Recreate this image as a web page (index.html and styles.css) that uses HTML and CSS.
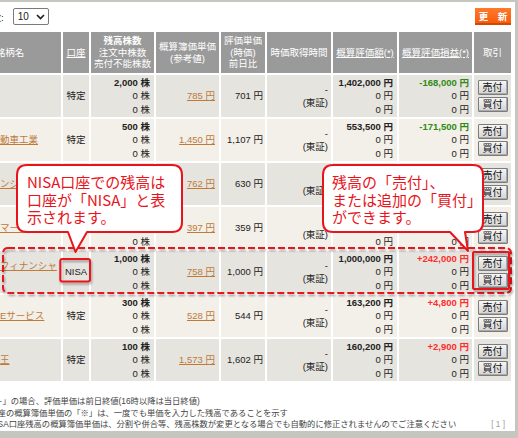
FILE: index.html
```html
<!DOCTYPE html>
<html lang="ja">
<head>
<meta charset="utf-8">
<title>保有株式一覧</title>
<link rel="stylesheet" href="styles.css">
</head>
<body>
<div class="frame">
  <div class="toolbar">
    <div class="perpage">
      <span>表示件数:</span>
      <div class="select"><span>10</span><svg width="9" height="6" viewBox="0 0 9 6"><polyline points="1,1 4.5,4.5 8,1" fill="none" stroke="#222" stroke-width="1.7"/></svg></div>
    </div>
    <button class="refresh">更　新</button>
  </div>
  <table class="holdings">
    <colgroup>
      <col style="width:104px"><col style="width:28px"><col style="width:65px"><col style="width:65px"><col style="width:46px"><col style="width:66px"><col style="width:66px"><col style="width:75px"><col style="width:39px">
    </colgroup>
    <thead>
      <tr>
        <th>銘柄名</th>
        <th><span class="ul">口座</span></th>
        <th><b>残高株数</b><br>注文中株数<br>売付不能株数</th>
        <th>概算簿価単価<br>(参考値)</th>
        <th>評価単価<br>(時価)<br>前日比</th>
        <th>時価取得時間</th>
        <th><span class="ul">概算評価額(*)</span></th>
        <th><span class="ul">概算評価損益(*)</span></th>
        <th>取引</th>
      </tr>
    </thead>
    <tbody>
      <tr>
        <td class="name"><a href="#">日立</a></td>
        <td>特定</td>
        <td><b>2,000 株</b><br>0 株<br>0 株</td>
        <td><a href="#">785 円</a></td>
        <td>701 円</td>
        <td>-<br>(東証)</td>
        <td><b>1,402,000 円</b><br>0 円<br>0 円</td>
        <td><b class="neg">-168,000 円</b><br>0 円<br>0 円</td>
        <td><button class="trade">売付</button><button class="trade">買付</button></td>
      </tr>
      <tr>
        <td class="name"><a href="#">トヨタ自動車工業</a></td>
        <td>特定</td>
        <td><b>500 株</b><br>0 株<br>0 株</td>
        <td><a href="#">1,450 円</a></td>
        <td>1,107 円</td>
        <td>-<br>(東証)</td>
        <td><b>553,500 円</b><br>0 円<br>0 円</td>
        <td><b class="neg">-171,500 円</b><br>0 円<br>0 円</td>
        <td><button class="trade">売付</button><button class="trade">買付</button></td>
      </tr>
      <tr>
        <td class="name"><a href="#">日本オレンジ工業</a></td>
        <td>特定</td>
        <td><b>1,000 株</b><br>0 株<br>0 株</td>
        <td><a href="#">762 円</a></td>
        <td>630 円</td>
        <td>-<br>(東証)</td>
        <td><b>630,000 円</b><br>0 円<br>0 円</td>
        <td><b class="neg">-132,000 円</b><br>0 円<br>0 円</td>
        <td><button class="trade">売付</button><button class="trade">買付</button></td>
      </tr>
      <tr>
        <td class="name"><a href="#">セイコーマート</a></td>
        <td>特定</td>
        <td><b>1,000 株</b><br>0 株<br>0 株</td>
        <td><a href="#">397 円</a></td>
        <td>359 円</td>
        <td>-<br>(東証)</td>
        <td><b>359,000 円</b><br>0 円<br>0 円</td>
        <td><b class="neg">-38,000 円</b><br>0 円<br>0 円</td>
        <td><button class="trade">売付</button><button class="trade">買付</button></td>
      </tr>
      <tr>
        <td class="name"><a href="#">三井住友フィナンシャルG</a></td>
        <td>NISA</td>
        <td><b>1,000 株</b><br>0 株<br>0 株</td>
        <td><a href="#">758 円</a></td>
        <td>1,000 円</td>
        <td>-<br>(東証)</td>
        <td><b>1,000,000 円</b><br>0 円<br>0 円</td>
        <td><b class="pos">+242,000 円</b><br>0 円<br>0 円</td>
        <td><button class="trade">売付</button><button class="trade">買付</button></td>
      </tr>
      <tr>
        <td class="name"><a href="#">東京電力Eサービス</a></td>
        <td>特定</td>
        <td><b>300 株</b><br>0 株<br>0 株</td>
        <td><a href="#">528 円</a></td>
        <td>544 円</td>
        <td>-<br>(東証)</td>
        <td><b>163,200 円</b><br>0 円<br>0 円</td>
        <td><b class="pos">+4,800 円</b><br>0 円<br>0 円</td>
        <td><button class="trade">売付</button><button class="trade">買付</button></td>
      </tr>
      <tr>
        <td class="name"><a href="#">ニベア花王</a></td>
        <td>特定</td>
        <td><b>100 株</b><br>0 株<br>0 株</td>
        <td><a href="#">1,573 円</a></td>
        <td>1,602 円</td>
        <td>-<br>(東証)</td>
        <td><b>160,200 円</b><br>0 円<br>0 円</td>
        <td><b class="pos">+2,900 円</b><br>0 円<br>0 円</td>
        <td><button class="trade">売付</button><button class="trade">買付</button></td>
      </tr>
    </tbody>
  </table>
  <div class="notes">
    <p>※「−」の場合、評価単価は前日終値(16時以降は当日終値)</p>
    <p>※口座の概算簿価単価の「※」は、一度でも単価を入力した残高であることを示す</p>
    <p class="last"><span>※NISA口座残高の概算簿価単価は、分割や併合等、残高株数が変更となる場合でも自動的に修正されませんのでご注意ください</span><span class="pager">[ 1 ]</span></p>
  </div>
</div>

<svg class="marks" width="518" height="438" viewBox="0 0 518 438">
  <defs>
    <filter id="sh" x="-10%" y="-20%" width="130%" height="160%">
      <feDropShadow dx="1" dy="2" stdDeviation="1.3" flood-color="#000" flood-opacity="0.35"/>
    </filter>
  </defs>
  <rect x="3" y="248" width="508" height="45" rx="5" fill="none" stroke="#e8141c" stroke-width="2" stroke-dasharray="7 3" filter="url(#sh)"/>
  <rect x="60.3" y="259" width="29.7" height="22.5" rx="2" fill="none" stroke="#e8141c" stroke-width="2" filter="url(#sh)"/>
  <rect x="473" y="252" width="36" height="37" rx="1" fill="none" stroke="#e8141c" stroke-width="2" filter="url(#sh)"/>
  <path d="M27 165 H172 Q182 165 182 175 V222 Q182 232 172 232 H87 L75.5 252 L68 232 H27 Q17 232 17 222 V175 Q17 165 27 165 Z" fill="#fff" stroke="#e8141c" stroke-width="2" stroke-linejoin="round"/>
  <path d="M333 165 H473 Q483 165 483 175 V222 Q483 232 473 232 H465 L468 251 L450 232 H333 Q323 232 323 222 V175 Q323 165 333 165 Z" fill="#fff" stroke="#e8141c" stroke-width="2" stroke-linejoin="round"/>
</svg>
<div class="callout-text callout-left">NISA口座での残高は<br>口座が「NISA」と表<br>示されます。</div>
<div class="callout-text callout-right">残高の「売付」、<br>または追加の「買付」<br>ができます。</div>
</body>
</html>
```

FILE: styles.css
```css
* { box-sizing: border-box; }

body {
  margin: 0;
  width: 518px;
  height: 438px;
  overflow: hidden;
  position: relative;
  background: #c6c6c0;
  font-family: "Liberation Sans", "Noto Sans CJK JP", sans-serif;
  color: #333;
}

.frame {
  width: 566px;
  height: 429px;
  margin: 2px 0 0 -51px;
  padding: 6px 4px 0 8px;
  background: #fff;
}

.toolbar {
  display: flex;
  justify-content: space-between;
  align-items: center;
  height: 17px;
  margin-bottom: 5px;
}

.perpage {
  display: flex;
  align-items: center;
  gap: 9px;
  padding-left: 6px;
  font-size: 9.5px;
  color: #222;
}

.select {
  display: flex;
  align-items: center;
  justify-content: space-between;
  width: 36px;
  height: 17px;
  border: 1px solid #7a7a7a;
  border-radius: 2px;
  padding: 0 3px 0 4px;
  font-size: 10px;
  color: #222;
  background: #fff;
}

.refresh {
  width: 36px;
  height: 17px;
  border: 0;
  padding: 0;
  background: linear-gradient(#ff7a2c, #f5580a);
  box-shadow: inset 0 -2px 0 #d44800;
  color: #fff;
  font-family: "Liberation Sans", "Noto Sans CJK JP", sans-serif;
  font-weight: bold;
  font-size: 9.5px;
  line-height: 15px;
}

.holdings {
  width: 554px;
  table-layout: fixed;
  border-collapse: collapse;
  font-size: 9.5px;
}

.holdings th,
.holdings td {
  border: 2px solid #fff;
  padding: 0 3px;
  vertical-align: middle;
  overflow: hidden;
  white-space: nowrap;
}

.holdings th {
  background: #9a9a9a;
  color: #fff;
  font-weight: normal;
  line-height: 11.5px;
  height: 43px;
  text-align: center;
}

.holdings th b { font-weight: bold; }
.ul { text-decoration: underline; }

.holdings td {
  height: 44px;
  line-height: 13.5px;
  color: #222;
  text-align: right;
}

.holdings tbody tr:nth-child(odd) td { background: #e6e4df; }
.holdings tbody tr:nth-child(even) td { background: #f3efe9; }

.holdings td.name {
  text-align: left;
  white-space: normal;
  word-break: break-all;
}

.holdings td:nth-child(2) { text-align: center; padding: 0; }
.holdings td:nth-child(3) { padding-right: 4px; }
.holdings td:nth-child(4) { padding-right: 4px; }
.holdings td:nth-child(5) { padding-right: 2px; }
.holdings td:nth-child(6) { padding-right: 3px; }
.holdings td:nth-child(7) { padding-right: 4px; }
.holdings td:nth-child(8) { padding-right: 3px; }
.holdings td:nth-child(9) { text-align: center; padding: 0; }

.holdings a {
  color: #c07a38;
  text-decoration: underline;
}

.neg { color: #2f8a13; }
.pos { color: #ff2d2d; }

.trade {
  display: block;
  width: 30px;
  height: 15px;
  margin: 0 auto;
  padding: 0;
  border: 1px solid #7c7c7c;
  border-radius: 1px;
  background: linear-gradient(#f6f6f6, #d4d4d4);
  box-shadow: inset -1px -1px 0 #aaa;
  font-family: "Liberation Sans", "Noto Sans CJK JP", sans-serif;
  font-size: 10px;
  line-height: 13px;
  color: #111;
}

.trade + .trade { margin-top: 2px; }

.notes {
  margin-top: 13px;
  padding-left: 24px;
  font-size: 8.3px;
  line-height: 11.5px;
  color: #444;
  white-space: nowrap;
}

.notes p { margin: 0; }

.notes .last {
  display: flex;
  justify-content: space-between;
  padding-right: 6px;
}

.pager { color: #a0a0a0; }

.marks {
  position: absolute;
  left: 0;
  top: 0;
}

.callout-text {
  position: absolute;
  top: 173px;
  font-family: "Noto Sans CJK JP", sans-serif;
  font-size: 15px;
  line-height: 17.5px;
  color: #e8141c;
  white-space: nowrap;
}

.callout-left { left: 27px; }
.callout-right { left: 332px; }
```
